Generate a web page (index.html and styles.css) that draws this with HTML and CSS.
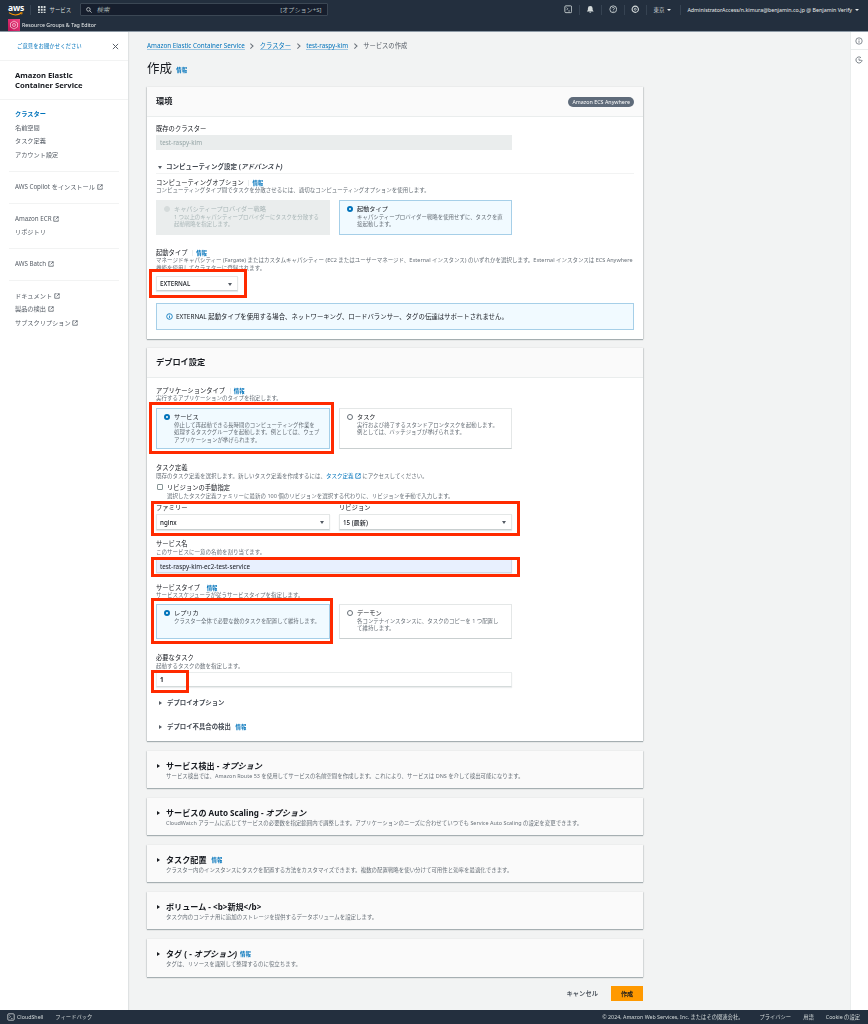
FILE: index.html
```html
<!DOCTYPE html>
<html lang="ja">
<head>
<meta charset="utf-8">
<title>サービスの作成</title>
<link rel="stylesheet" href="styles.css">
</head>
<body>
<svg class="defs" width="0" height="0" aria-hidden="true">
  <symbol id="ext" viewBox="0 0 16 16"><path d="M7 2H2v12h12V9" fill="none" stroke="currentColor" stroke-width="2"/><path d="M9 2h5v5M14 2L7 9" fill="none" stroke="currentColor" stroke-width="2"/></symbol>
</svg>

<header class="topbar">
  <div class="nav-row">
    <div class="logo">
      <span class="logo-text">aws</span>
      <svg class="logo-smile" viewBox="0 0 16 4"><path d="M1 .6C5 3.4 10.500 3.400 14.500 1" fill="none" stroke="#ff9900" stroke-width="1.100"/><path d="M13 .5h2.200l-.6 2" fill="none" stroke="#ff9900" stroke-width=".8"/></svg>
    </div>
    <span class="bar-sep"></span>
    <svg class="grid-icon" viewBox="0 0 8 8"><path d="M0 0h2v2H0zM3 0h2v2H3zM6 0h2v2H6zM0 3h2v2H0zM3 3h2v2H3zM6 3h2v2H6zM0 6h2v2H0zM3 6h2v2H3zM6 6h2v2H6z" fill="#d5dbdb"/></svg>
    <span class="services">サービス</span>
    <div class="search">
      <svg class="search-icon" viewBox="0 0 8 8"><circle cx="3.200" cy="3.200" r="2.400" fill="none" stroke="#d5dbdb"/><path d="M5 5l2.500 2.500" stroke="#d5dbdb"/></svg>
      <span class="search-text">検索</span>
      <span class="search-key">[オプション+S]</span>
    </div>
    <div class="bar-right">
      <svg class="bar-icon" viewBox="0 0 10 10"><rect x="1" y="1" width="8" height="8" rx="1.200" fill="none" stroke="#d5dbdb"/><path d="M3 3l1.500 1.500L3 6M5 7h2" fill="none" stroke="#d5dbdb" stroke-width=".8"/></svg>
      <span class="bar-sep"></span>
      <svg class="bar-icon" viewBox="0 0 10 10"><path d="M1 7.500h8L7.800 6V4a2.800 2.800 0 0 0-5.600 0v2z" fill="#d5dbdb"/><path d="M4 8.500h2" stroke="#d5dbdb"/></svg>
      <span class="bar-sep"></span>
      <svg class="bar-icon" viewBox="0 0 10 10"><circle cx="5" cy="5" r="4" fill="none" stroke="#d5dbdb"/><path d="M3.500 3.800C3.800 2.500 6.400 2.600 6.400 4 6.400 5 5 5 5 6M5 6.800v1" fill="none" stroke="#d5dbdb" stroke-width=".9"/></svg>
      <span class="bar-sep"></span>
      <svg class="bar-icon" viewBox="0 0 10 10"><circle cx="5" cy="5" r="3.700" fill="none" stroke="#d5dbdb" stroke-width="1.300"/><circle cx="5" cy="5" r="1.200" fill="none" stroke="#d5dbdb" stroke-width=".9"/></svg>
      <span class="bar-sep"></span>
      <span class="region">東京</span><span class="tri-down light region-caret"></span>
      <span class="bar-sep"></span>
      <span class="account">AdministratorAccess/n.kimura@benjamin.co.jp @ Benjamin Verify</span><span class="tri-down light"></span>
    </div>
  </div>
  <div class="fav-row">
    <svg class="fav-icon" viewBox="0 0 12 12"><defs><linearGradient id="pink" x1="0" y1="1" x2="1" y2="0"><stop offset="0" stop-color="#bc1356"/><stop offset="1" stop-color="#f34482"/></linearGradient></defs><rect width="12" height="12" fill="url(#pink)"/><path d="M6 2l3.500 2v4L6 10 2.500 8V4z" fill="none" stroke="#f9d3e0" stroke-width=".7"/><circle cx="6" cy="6" r="1.500" fill="none" stroke="#f9d3e0" stroke-width=".7"/></svg>
    <span>Resource Groups &amp; Tag Editor</span>
  </div>
</header>

<div class="shell">
  <aside class="sidebar">
    <div class="side-top">
      <a class="feedback">ご意見をお聞かせください</a>
      <svg class="close" viewBox="0 0 8 8"><path d="M1 1l6 6M7 1L1 7" stroke="#545b64" stroke-width="1.100"/></svg>
    </div>
    <div class="side-title">Amazon Elastic<br>Container Service</div>
    <nav class="nav-group first">
      <a class="nav-item active">クラスター</a>
      <a class="nav-item">名前空間</a>
      <a class="nav-item">タスク定義</a>
      <a class="nav-item">アカウント設定</a>
    </nav>
    <nav class="nav-group">
      <a class="nav-item">AWS Copilot をインストール <svg class="ext"><use href="#ext"/></svg></a>
    </nav>
    <nav class="nav-group">
      <a class="nav-item">Amazon ECR <svg class="ext"><use href="#ext"/></svg></a>
      <a class="nav-item">リポジトリ</a>
    </nav>
    <nav class="nav-group">
      <a class="nav-item">AWS Batch <svg class="ext"><use href="#ext"/></svg></a>
    </nav>
    <nav class="nav-group last">
      <a class="nav-item">ドキュメント <svg class="ext"><use href="#ext"/></svg></a>
      <a class="nav-item">製品の検出 <svg class="ext"><use href="#ext"/></svg></a>
      <a class="nav-item">サブスクリプション <svg class="ext"><use href="#ext"/></svg></a>
    </nav>
  </aside>

  <main class="content">
    <div class="crumbs">
      <a>Amazon Elastic Container Service</a><span class="chev"></span>
      <a>クラスター</a><span class="chev"></span>
      <a>test-raspy-kim</a><span class="chev"></span>
      <span>サービスの作成</span>
    </div>
    <h1 class="page-title">作成 <span class="info">情報</span></h1>

    <section class="card">
      <div class="card-head">
        <h2>環境</h2>
        <span class="badge">Amazon ECS Anywhere</span>
      </div>
      <div class="card-body env-body">
        <div class="label lh10">既存のクラスター</div>
        <div class="input disabled mt2">test-raspy-kim</div>
        <div class="expander open mt12"><span class="tri-down"></span>コンピューティング設定 (<em>アドバンスト)</em></div>
        <div class="label mt5">コンピューティングオプション <span class="label-sep"></span><span class="info">情報</span></div>
        <div class="desc">コンピューティングタイプ間でタスクを分散させるには、適切なコンピューティングオプションを使用します。</div>
        <div class="tiles mt6 h35">
          <div class="tile off">
            <span class="radio"></span>
            <div><div class="tile-title">キャパシティープロバイダー戦略</div><div class="tile-desc">1 つ以上のキャパシティープロバイダーにタスクを分散する<br>起動戦略を指定します。</div></div>
          </div>
          <div class="tile on">
            <span class="radio"></span>
            <div><div class="tile-title">起動タイプ</div><div class="tile-desc">キャパシティープロバイダー戦略を使用せずに、タスクを直<br>接起動します。</div></div>
          </div>
        </div>
        <div class="label mt13">起動タイプ <span class="label-sep"></span><span class="info">情報</span></div>
        <div class="desc tight mt1">マネージドキャパシティー (Fargate) またはカスタムキャパシティー (EC2 またはユーザーマネージド、External インスタンス) のいずれかを選択します。External インスタンスは ECS Anywhere<br>機能を使用してクラスターに登録されます。</div>
        <div class="select launch mt4">EXTERNAL<span class="tri-down"></span></div>
        <div class="alert mt12">
          <svg class="alert-icon" viewBox="0 0 10 10"><circle cx="5" cy="5" r="4" fill="none" stroke="#0073bb" stroke-width="1.200"/><path d="M5 4.300v3M5 2.500v1" stroke="#0073bb" stroke-width="1.100"/></svg>
          EXTERNAL 起動タイプを使用する場合、ネットワーキング、ロードバランサー、タグの伝達はサポートされません。
        </div>
      </div>
    </section>

    <section class="card">
      <div class="card-head"><h2>デプロイ設定</h2></div>
      <div class="card-body deploy-body">
        <div class="label">アプリケーションタイプ <span class="label-sep"></span><span class="info">情報</span></div>
        <div class="desc">実行するアプリケーションのタイプを指定します。</div>
        <div class="tiles mt6 h41">
          <div class="tile on">
            <span class="radio"></span>
            <div><div class="tile-title">サービス</div><div class="tile-desc">停止して再起動できる長時間のコンピューティング作業を<br>処理するタスクグループを起動します。例としては、ウェブ<br>アプリケーションが挙げられます。</div></div>
          </div>
          <div class="tile plain">
            <span class="radio"></span>
            <div><div class="tile-title">タスク</div><div class="tile-desc">実行および終了するスタンドアロンタスクを起動します。<br>例としては、バッチジョブが挙げられます。</div></div>
          </div>
        </div>
        <div class="label mt14">タスク定義</div>
        <div class="desc mt1">既存のタスク定義を選択します。新しいタスク定義を作成するには、<a class="inline-link">タスク定義 <svg class="ext"><use href="#ext"/></svg></a> にアクセスしてください。</div>
        <div class="check-row mt3"><span class="check"></span>リビジョンの手動指定</div>
        <div class="desc check-desc mt1">選択したタスク定義ファミリーに最新の 100 個のリビジョンを選択する代わりに、リビジョンを手動で入力します。</div>
        <div class="pair mt3">
          <div>
            <div class="label">ファミリー</div>
            <div class="select mt3">nginx<span class="tri-down"></span></div>
          </div>
          <div>
            <div class="label">リビジョン</div>
            <div class="select mt3">15 (最新)<span class="tri-down"></span></div>
          </div>
        </div>
        <div class="label mt9">サービス名</div>
        <div class="desc mt1">このサービスに一意の名前を割り当てます。</div>
        <div class="input filled mt3">test-raspy-kim-ec2-test-service</div>
        <div class="label mt10">サービスタイプ <span class="info gap">情報</span></div>
        <div class="desc">サービススケジューラが従うサービスタイプを指定します。</div>
        <div class="tiles mt5 h35">
          <div class="tile on">
            <span class="radio"></span>
            <div><div class="tile-title">レプリカ</div><div class="tile-desc">クラスター全体で必要な数のタスクを配置して維持します。</div></div>
          </div>
          <div class="tile plain">
            <span class="radio"></span>
            <div><div class="tile-title">デーモン</div><div class="tile-desc">各コンテナインスタンスに、タスクのコピーを 1 つ配置し<br>て維持します。</div></div>
          </div>
        </div>
        <div class="label mt14">必要なタスク</div>
        <div class="desc mt1">起動するタスクの数を指定します。</div>
        <div class="input count mt2">1</div>
        <div class="expander mt12"><span class="tri-right"></span>デプロイオプション</div>
        <div class="expander mt16"><span class="tri-right"></span>デプロイ不具合の検出 <span class="info">情報</span></div>
      </div>
    </section>

    <section class="fold">
      <h3><span class="tri-right dark"></span>サービス検出 - <em>オプション</em></h3>
      <p>サービス検出では、Amazon Route 53 を使用してサービスの名前空間を作成します。これにより、サービスは DNS を介して検出可能になります。</p>
    </section>
    <section class="fold">
      <h3><span class="tri-right dark"></span>サービスの Auto Scaling - <em>オプション</em></h3>
      <p>CloudWatch アラームに応じてサービスの必要数を指定範囲内で調整します。アプリケーションのニーズに合わせていつでも Service Auto Scaling の設定を変更できます。</p>
    </section>
    <section class="fold">
      <h3><span class="tri-right dark"></span>タスク配置 <span class="info">情報</span></h3>
      <p>クラスター内のインスタンスにタスクを配置する方法をカスタマイズできます。複数の配置戦略を使い分けて可用性と効率を最適化できます。</p>
    </section>
    <section class="fold">
      <h3><span class="tri-right dark"></span>ボリューム - &lt;b&gt;新規&lt;/b&gt;</h3>
      <p>タスク内のコンテナ用に追加のストレージを提供するデータボリュームを設定します。</p>
    </section>
    <section class="fold tall">
      <h3><span class="tri-right dark"></span>タグ ( - <em>オプション)</em> <span class="info">情報</span></h3>
      <p>タグは、リソースを識別して整理するのに役立ちます。</p>
    </section>

    <div class="actions">
      <span class="cancel">キャンセル</span>
      <span class="create">作成</span>
    </div>
  </main>

  <aside class="rail">
    <div class="rail-cell top">
      <svg class="rail-icon" viewBox="0 0 10 10"><circle cx="5" cy="5" r="4" fill="none" stroke="#687078"/><path d="M5 4.300v3M5 2.500v1" stroke="#687078"/></svg>
    </div>
    <div class="rail-cell lower">
      <svg class="rail-icon" viewBox="0 0 10 10"><path d="M8.800 5A3.800 3.800 0 1 1 7.500 2.100" fill="none" stroke="#687078" stroke-width="1.100"/><path d="M5 3v2.300h3" fill="none" stroke="#687078"/></svg>
    </div>
  </aside>
</div>

<footer class="footer">
  <svg class="shell-icon" viewBox="0 0 10 10"><rect x="1" y="1" width="8" height="8" rx="1.200" fill="none" stroke="#d5dbdb"/><path d="M3 3l1.500 1.500L3 6M5 7h2" fill="none" stroke="#d5dbdb" stroke-width=".8"/></svg>
  <span class="foot-shell">CloudShell</span>
  <span class="foot-fb">フィードバック</span>
  <span class="foot-copy">© 2024, Amazon Web Services, Inc. またはその関連会社。</span>
  <span class="foot-link gap1">プライバシー</span>
  <span class="foot-link gap2">用語</span>
  <span class="foot-link gap2 end">Cookie の設定</span>
</footer>

<div class="mark m-launch"></div>
<div class="mark m-service"></div>
<div class="mark m-family"></div>
<div class="mark m-name"></div>
<div class="mark m-replica"></div>
<div class="mark m-count"></div>
</body>
</html>
```

FILE: styles.css
```css
* { box-sizing: border-box; }
html, body { margin: 0; padding: 0; }
body {
  position: relative;
  width: 868px;
  height: 1024px;
  overflow: hidden;
  display: flex;
  flex-direction: column;
  font-family: "Noto Sans", "Noto Sans CJK JP", sans-serif;
  font-size: 6.2px;
  color: #16191f;
  background: #f2f3f3;
  filter: blur(.35px);
}
.defs { position: absolute; }
h1, h2, h3, p { margin: 0; font-weight: inherit; }

/* top bar */
.topbar { height: 32px; flex: none; background: #232f3e; color: #eaeded; border-bottom: 1px solid #8d99a5; }
.nav-row { height: 19px; display: flex; align-items: center; padding: 0 8px; }
.logo { width: 15px; height: 12px; position: relative; flex: none; }
.logo-text { display: block; font-size: 8.5px; font-weight: 700; line-height: 8px; color: #fff; text-align: center; letter-spacing: -.2px; }
.logo-smile { position: absolute; left: 0; top: 8px; width: 15px; height: 4px; }
.bar-sep { width: 1px; height: 10px; background: #364352; flex: none; }
.nav-row > .bar-sep { margin: 0 7px; }
.grid-icon { width: 7.500px; height: 7.500px; flex: none; margin-right: 4px; }
.services { font-size: 5.400px; width: 22px; flex: none; color: #d5dbdb; }
.search {
  margin-left: 8px; width: 248px; height: 13px; flex: none;
  display: flex; align-items: center; padding: 0 5px;
  background: #161e2d; border: 1px solid #3b4754; border-radius: 1px;
}
.search-icon { width: 6px; height: 6px; margin-right: 5px; }
.search-text { font-size: 6.400px; font-style: italic; color: #aab7b8; }
.search-key { margin-left: auto; font-size: 6.100px; color: #aab7b8; }
.bar-right { margin-left: auto; display: flex; align-items: center; padding-right: 1px; }
.bar-right .bar-sep { margin: 0 6.500px; }
.bar-icon { width: 8.500px; height: 8.500px; flex: none; }
.region { font-size: 5.400px; color: #d5dbdb; margin-right: 3px; }
.region-caret { margin-right: 2px; }
.account { font-size: 5.350px; color: #eaeded; margin-right: 3px; white-space: nowrap; }
.fav-row { height: 12px; display: flex; align-items: center; padding-left: 8px; font-size: 5.300px; color: #eaeded; }
.fav-icon { width: 12px; height: 12px; margin-right: 2px; flex: none; }

/* triangles */
.tri-down { display: inline-block; width: 0; height: 0; border-left: 2.500px solid transparent; border-right: 2.500px solid transparent; border-top: 3px solid #545b64; }
.tri-down.light { border-left-width: 2px; border-right-width: 2px; border-top: 2.500px solid #eaeded; flex: none; }
.tri-right { display: inline-block; width: 0; height: 0; border-top: 2.500px solid transparent; border-bottom: 2.500px solid transparent; border-left: 3px solid #545b64; }
.tri-right.dark { border-left-color: #16191f; }

/* layout shell */
.shell { flex: 1; min-height: 0; display: flex; }
.sidebar { width: 128px; flex: none; background: #fff; box-shadow: 1px 0 1px rgba(0,28,36,.08); color: #545b64; }
.content { flex: 1; min-width: 0; padding: 0 207px 0 19px; }
.rail { width: 18px; flex: none; background: #fff; border-left: 1px solid #eaeded; }

/* sidebar */
.side-top { height: 29px; padding: 0 10px 0 17px; display: flex; align-items: center; justify-content: space-between; border-bottom: 1px solid #f2f3f3; }
.feedback { font-size: 5.400px; color: #0073bb; }
.close { width: 7px; height: 7px; margin-right: -1px; }
.side-title { padding: 9px 15px; font-size: 7.700px; line-height: 10px; font-weight: 700; color: #16191f; border-bottom: 1px solid #f2f3f3; height: 39px; }
.nav-group { margin: 0 9px; padding: 8px 6px 9px; border-bottom: 1px solid #f2f3f3; }
.nav-group.first { padding-top: 7px; padding-bottom: 9px; }
.nav-group.last { border-bottom: 0; }
.nav-item { display: block; line-height: 13.700px; font-size: 6.200px; color: #545b64; }
.nav-item.active { color: #0073bb; font-weight: 700; }
.ext { width: 6px; height: 6px; vertical-align: -1px; color: #545b64; }

/* main */
.crumbs { height: 8px; margin-top: 10px; display: flex; align-items: center; font-size: 6.300px; line-height: 8px; color: #545b64; white-space: nowrap; }
.crumbs a { color: #0073bb; border-bottom: 1px solid #9fc7e2; line-height: 7px; }
.chev { width: 3.500px; height: 3.500px; margin: 0 7px 0 4.500px; border-top: 1px solid #687078; border-right: 1px solid #687078; transform: rotate(45deg); flex: none; }
.page-title { height: 16px; margin-top: 11px; font-size: 12.500px; line-height: 16px; color: #16191f; white-space: nowrap; }
.info { font-size: 5.400px; font-weight: 700; font-style: normal; color: #0073bb; letter-spacing: 0; }
.info.gap { margin-left: 5px; }
.page-title .info { margin-left: 1px; vertical-align: 1px; }

.card { background: #fff; box-shadow: 0 1px 1px rgba(0,28,36,.3), 1px 0 1px rgba(0,28,36,.1), -1px 0 1px rgba(0,28,36,.1); margin-top: 10px; }
.card + .card { margin-top: 9px; }
.card-head { height: 30px; padding: 0 9px; display: flex; align-items: center; justify-content: space-between; background: #fafafa; border-bottom: 1px solid #eaeded; }
.card-head h2 { margin-bottom: 4px; font-size: 8.200px; font-weight: 700; color: #16191f; }
.badge { height: 10px; padding: 0 4px; border-radius: 5px; background: #5f6b7a; color: #fff; font-size: 5.350px; line-height: 10px; white-space: nowrap; }
.card-body { padding-left: 9px; padding-right: 9px; }
.env-body { padding-top: 6px; padding-bottom: 9px; }
.deploy-body { padding-top: 8px; padding-bottom: 10px; }

.label { height: 8px; line-height: 10px; font-size: 6.300px; color: #16191f; white-space: nowrap; }
.label.lh10 { height: 10px; line-height: 12px; }
.label-sep { display: inline-block; width: 1px; height: 6px; background: #eaeded; margin: 0 3px; vertical-align: -1px; }
.desc { line-height: 8px; font-size: 5.500px; color: #687078; white-space: nowrap; }
.desc.tight { line-height: 7.500px; height: 15px; }
.check-desc { padding-left: 11px; }
.inline-link { color: #0073bb; }
.inline-link .ext { color: #0073bb; }

.mt1 { margin-top: 1px; } .mt2 { margin-top: 2px; } .mt3 { margin-top: 3px; }
.mt4 { margin-top: 4px; } .mt5 { margin-top: 5px; } .mt6 { margin-top: 6px; }
.mt9 { margin-top: 9px; } .mt10 { margin-top: 10px; } .mt11 { margin-top: 11px; }
.mt12 { margin-top: 12px; } .mt13 { margin-top: 13px; } .mt14 { margin-top: 14px; }
.mt16 { margin-top: 16px; }

.input { width: 356px; height: 15px; padding: 0 3px; line-height: 14px; font-size: 6.300px; background: #fff; border: 1px solid #eaeded; border-bottom-color: #d5dbdb; box-shadow: 0 1px 1px rgba(0,28,36,.08); }
.input.disabled { background: #eaeded; border-color: #eaeded; box-shadow: none; color: #95a5a6; }
.input.filled { height: 14px; line-height: 13px; background: #e8f0fe; border-color: #cfdbea; }
.input.count { font-weight: 700; }

.expander { display: flex; align-items: center; line-height: 10px; font-size: 6.400px; font-weight: 700; color: #414750; padding-left: 3px; height: 8px; white-space: pre; }
.expander .tri-down, .expander .tri-right { margin-right: 5px; }
.expander .info { margin-left: 3px; }
.expander em { font-style: italic; }
.expander.open { box-sizing: content-box; height: 10px; padding-left: 2px; padding-bottom: 1px; font-size: 6.500px; border-bottom: 1px solid #f2f3f3; }
.expander.open .tri-down { margin-right: 4px; }
.expander.open + .label { margin-top: 4px; }

.tiles { display: grid; width: 356px; grid-template-columns: 174px 173px; column-gap: 9px; }
.h35 { height: 35px; }
.h41 { height: 41px; }
.tile { display: flex; padding: 4px 4px 0 7px; border: 1px solid #eaeded; white-space: nowrap; }
.tile-title { line-height: 8px; font-size: 6.200px; color: #16191f; }
.tile-desc { margin-top: 1px; line-height: 7.400px; font-size: 5.450px; color: #687078; }
.radio { width: 6px; height: 6px; flex: none; margin: 1px 4px 0 0; border-radius: 50%; background: #fff; border: 1px solid #687078; }
.tile.on { background: #f1faff; border-color: #a6cfe8; }
.tile.on .radio { border: 2px solid #0073bb; }
.tile.plain { border-color: #e4e7e7; border-bottom-color: #c9cfd0; }
.tile.off { background: #eaeded; border-color: #eaeded; }
.tile.off .radio { background: #d5dbdb; border-color: #d5dbdb; }
.tile.off .tile-title, .tile.off .tile-desc { color: #aab7b8; }

.select { position: relative; height: 16px; padding: 0 3px; line-height: 15px; font-size: 6.200px; font-weight: 500; color: #16191f; background: #fff; border: 1px solid #e4e7e7; border-bottom-color: #c9cfd0; box-shadow: 0 1px 1px rgba(0,28,36,.1); }
.select .tri-down { position: absolute; right: 5px; top: 6px; border-left-width: 2px; border-right-width: 2px; }
.select.launch { width: 82px; height: 15px; line-height: 14px; }
.pair { width: 356px; display: grid; grid-template-columns: 174px 173px; column-gap: 9px; }

.check-row { display: flex; align-items: center; height: 8px; font-size: 6.300px; color: #16191f; padding-left: 1px; }
.check { width: 6px; height: 6px; flex: none; margin-right: 4px; background: #fff; border: 1px solid #879596; border-radius: 1px; }

.alert { display: flex; align-items: center; height: 27px; padding-left: 9px; font-size: 6.400px; color: #16191f; background: #f1faff; border: 1px solid #a6cfe8; }
.alert-icon { width: 7px; height: 7px; margin-right: 3px; flex: none; }

.fold { height: 37px; margin-top: 10px; padding: 10px 9px 0 10px; background: #fafafa; box-shadow: 0 1px 1px rgba(0,28,36,.3), 1px 0 1px rgba(0,28,36,.08), -1px 0 1px rgba(0,28,36,.08); }
.fold.tall { height: 38px; }
.fold h3 { display: flex; align-items: center; height: 9px; font-size: 8.100px; font-weight: 700; color: #16191f; white-space: pre; }
.fold h3 .tri-right { margin-right: 6px; }
.fold h3 .info { margin-left: 3px; }
.fold em { font-style: italic; }
.fold p { margin: 2px 0 0 9px; line-height: 8px; font-size: 5.450px; color: #687078; white-space: nowrap; }

.actions { margin-top: 9px; height: 15px; display: flex; justify-content: flex-end; align-items: center; }
.cancel { font-size: 6.300px; font-weight: 700; color: #545b64; margin-right: 13px; }
.create { width: 32px; height: 15px; background: #ff9900; color: #16191f; font-size: 6.100px; font-weight: 700; line-height: 15px; text-align: center; }

/* right rail */
.rail-cell { height: 18px; display: flex; align-items: center; justify-content: center; padding-right: 1px; }
.rail-cell.top { border-bottom: 1px solid #eaeded; }
.rail-cell.lower { padding-top: 2px; }
.rail-icon { width: 8px; height: 8px; }

/* footer */
.footer { height: 14px; flex: none; display: flex; align-items: center; padding: 0 8px 0 7px; background: #232f3e; color: #d5dbdb; font-size: 5.300px; white-space: nowrap; }
.shell-icon { width: 8px; height: 8px; margin-right: 2px; flex: none; }
.foot-fb { margin-left: 12px; }
.foot-copy { margin-left: auto; }
.gap1 { margin-left: 16px; }
.gap2 { margin-left: 12px; }

/* red annotation boxes drawn over the screenshot */
.mark { position: absolute; border: 3px solid #ff2a00; pointer-events: none; }
.m-launch { left: 149px; top: 269px; width: 98px; height: 29px; }
.m-service { left: 149px; top: 402px; width: 185px; height: 52px; }
.m-family { left: 151px; top: 501px; width: 369px; height: 35px; }
.m-name { left: 151px; top: 557px; width: 369px; height: 20px; }
.m-replica { left: 151px; top: 598px; width: 182px; height: 46px; }
.m-count { left: 151px; top: 670px; width: 38px; height: 23px; }
```
